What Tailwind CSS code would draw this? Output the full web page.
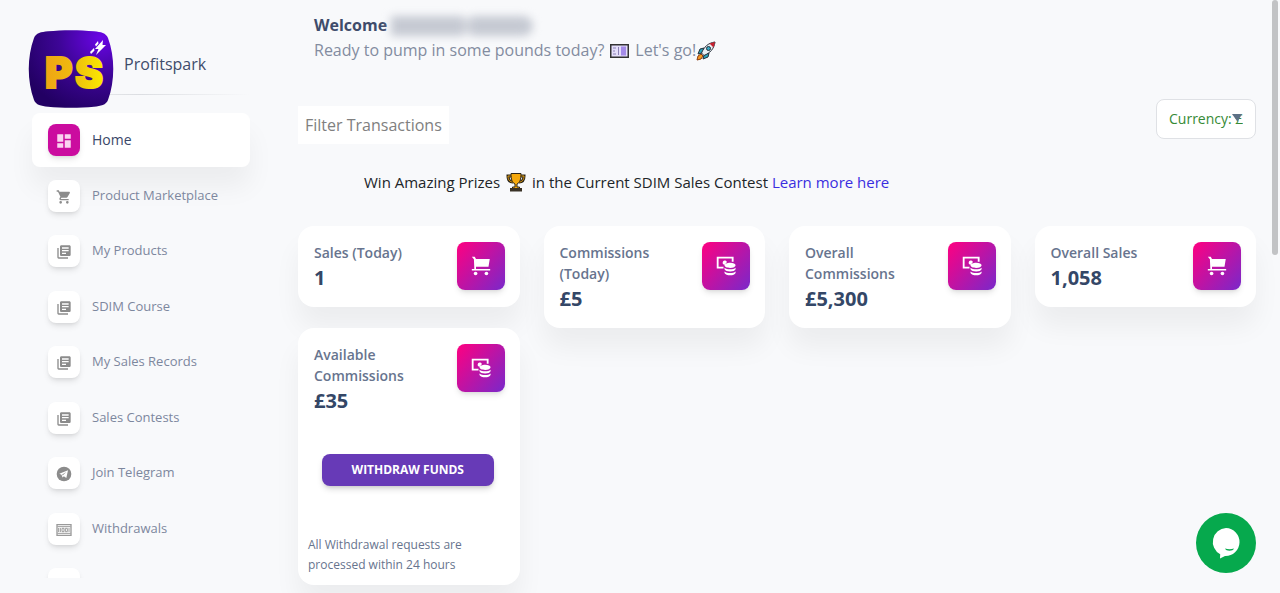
<!DOCTYPE html>
<html lang="en">
<head>
<meta charset="utf-8">
<meta name="viewport" content="width=device-width, initial-scale=1">
<title>Profitspark</title>
<script src="https://cdn.jsdelivr.net/npm/@tailwindcss/browser@4"></script>
</head>
<body class="bg-[#f8f9fb] font-['Open_Sans',sans-serif] text-[#67748e]">
<svg class="hidden" aria-hidden="true">
  <symbol id="cart" viewBox="0 0 24 24"><path fill="currentColor" d="M7 18a2 2 0 1 0 0 4 2 2 0 0 0 0-4zM1 2v2h2l3.600 7.600-1.350 2.440C4.520 15.370 5.480 17 7 17h12v-2H7.420l-.25-.25.9-1.750h7.450c.75 0 1.410-.41 1.750-1.030L21 5.500 20.200 4H5.210l-.94-2H1zm16 16a2 2 0 1 0 0 4 2 2 0 0 0 0-4z"/></symbol>
  <symbol id="cart-flat" viewBox="0 0 24 24"><path fill="currentColor" d="M1 1h3.500l1.500 2.500h16.500L21 13H6v2.500h17v2H1v-2h3L3.500 4z"/><circle cx="5.500" cy="21" r="2.200" fill="currentColor"/><circle cx="18.500" cy="21" r="2.200" fill="currentColor"/></symbol>
  <symbol id="books" viewBox="0 0 24 24"><path fill="currentColor" d="M4 6H2v14c0 1.100.9 2 2 2h14v-2H4V6zm16-4H8c-1.100 0-2 .9-2 2v12c0 1.100.9 2 2 2h12c1.100 0 2-.9 2-2V4c0-1.100-.9-2-2-2zm-1 9H9V9h10v2zm-4 4H9v-2h6v2zm4-8H9V5h10v2z"/></symbol>
  <symbol id="coins" viewBox="0 0 24 24"><path fill="none" stroke="currentColor" stroke-width="2.200" d="M9 14H2V2h18v5"/><path fill="currentColor" d="M11 5.500a2 2 0 0 1 2 2l-3 3a2 2 0 0 1 1-5zM17 8c3.700 0 6.500 1.200 6.500 3.200s-2.800 3.200-6.500 3.200-6.800-1.200-6.800-3.200S13.300 8 17 8zM10.200 14c1.500 1.400 4 2 6.800 2s5-.6 6.500-2v2c-.9 1.700-3.300 2.700-6.500 2.700s-5.900-1-6.800-2.700zM10.200 18.500c1.500 1.400 4 2 6.800 2s5-.6 6.500-2v1.800c-.9 1.800-3.300 2.800-6.500 2.800s-5.900-1-6.800-2.800z"/></symbol>
</svg>

<div class="flex h-screen overflow-hidden">
  <aside class="flex w-[282px] shrink-0 flex-col pt-[30px] pr-8 pb-[15px] pl-7">
    <a href="#" class="relative z-10 flex h-16 items-start gap-2.5 text-base font-medium text-[#3f4c6b]">
      <svg class="h-[78px] w-[86px] shrink-0" viewBox="0 0 86 78" role="img" aria-label="PS logo">
        <defs>
          <radialGradient id="lg" cx="0.85" cy="0.1" r="1"><stop offset="0" stop-color="#6a05e6"/><stop offset="0.5" stop-color="#3d0596"/><stop offset="1" stop-color="#220063"/></radialGradient>
          <linearGradient id="ps" x1="0" x2="1"><stop offset="0" stop-color="#f0a414"/><stop offset="0.5" stop-color="#eebc0e"/><stop offset="1" stop-color="#fbe900"/></linearGradient>
        </defs>
        <path fill="url(#lg)" d="M6 8C8 3 13 2 20 1.300 34-.2 52-.2 66 1.300c7 .7 12 1.700 14 6.700 7 19 7 43 0 62-2 5-7 6-14 6.700-14 1.500-32 1.500-46 0C13 76 8 75 6 70-1 51-1 27 6 8z"/>
        <text x="17 47" y="58" fill="url(#ps)" stroke="url(#ps)" stroke-width="2" font-family="Inter, sans-serif" font-weight="900" font-size="42">PS</text>
        <path fill="#fff" d="M75 10l-8 9h3.500L68 25l10-10h-3.500zM70 11l-3 3.500 1 2 2.500-3zM66 18l-4 4 1 2 3.500-3.500z"/>
      </svg>
      <span class="pt-[22px] leading-6">Profitspark</span>
    </a>
    <hr class="h-px border-0 bg-linear-to-r from-transparent via-[#dcdee2] to-transparent">
    <nav class="-mx-6 min-h-0 flex-1 overflow-hidden px-6 pt-[17px]">
      <ul class="pl-1 text-[13px] text-[#7d879e]">
        <li class="mt-px even:mt-0.5"><a href="#" class="flex h-[54px] items-center gap-3 rounded-lg bg-white px-4 text-sm font-medium text-[#3a4768] shadow-[0_20px_27px_0_rgba(0,0,0,0.05)]">
          <span class="grid size-8 place-items-center rounded-lg bg-[#cb0c9f] shadow-md shadow-black/10"><svg class="mt-0.5 size-[18px] text-[#fad3f0]" viewBox="0 0 24 24"><path fill="currentColor" d="M3 13h8V3H3v10zm0 8h8v-6H3v6zm10 0h8V11h-8v10zm0-18v6h8V3h-8z"/></svg></span>Home</a></li>
        <li class="mt-px even:mt-0.5"><a href="#" class="flex h-[54px] items-center gap-3 px-4"><span class="grid size-8 place-items-center rounded-lg bg-white shadow-md shadow-black/10"><svg class="mt-0.5 size-4 text-[#8c8c8c]"><use href="#cart"/></svg></span>Product Marketplace</a></li>
        <li class="mt-px even:mt-0.5"><a href="#" class="flex h-[54px] items-center gap-3 px-4"><span class="grid size-8 place-items-center rounded-lg bg-white shadow-md shadow-black/10"><svg class="mt-0.5 size-4 text-[#8c8c8c]"><use href="#books"/></svg></span>My Products</a></li>
        <li class="mt-px even:mt-0.5"><a href="#" class="flex h-[54px] items-center gap-3 px-4"><span class="grid size-8 place-items-center rounded-lg bg-white shadow-md shadow-black/10"><svg class="mt-0.5 size-4 text-[#8c8c8c]"><use href="#books"/></svg></span>SDIM Course</a></li>
        <li class="mt-px even:mt-0.5"><a href="#" class="flex h-[54px] items-center gap-3 px-4"><span class="grid size-8 place-items-center rounded-lg bg-white shadow-md shadow-black/10"><svg class="mt-0.5 size-4 text-[#8c8c8c]"><use href="#books"/></svg></span>My Sales Records</a></li>
        <li class="mt-px even:mt-0.5"><a href="#" class="flex h-[54px] items-center gap-3 px-4"><span class="grid size-8 place-items-center rounded-lg bg-white shadow-md shadow-black/10"><svg class="mt-0.5 size-4 text-[#8c8c8c]"><use href="#books"/></svg></span>Sales Contests</a></li>
        <li class="mt-px even:mt-0.5"><a href="#" class="flex h-[54px] items-center gap-3 px-4"><span class="grid size-8 place-items-center rounded-lg bg-white shadow-md shadow-black/10"><svg class="mt-0.5 size-4 text-[#8c8c8c]" viewBox="0 0 24 24"><circle cx="12" cy="12" r="11" fill="currentColor"/><path fill="#fff" d="M18 6.500L5 11.700l3.300 1.300 1.500 4.300 2-2 3.700 2.600zM15.500 9l-5.600 5.200-.6-1.400z"/></svg></span>Join Telegram</a></li>
        <li class="mt-px even:mt-0.5"><a href="#" class="flex h-[54px] items-center gap-3 px-4"><span class="grid size-8 place-items-center rounded-lg bg-white shadow-md shadow-black/10"><svg class="mt-0.5 size-4 text-[#9a9a9a]" viewBox="0 0 24 24"><path fill="none" stroke="currentColor" stroke-width="2" d="M1.500 4h21v16h-21z"/><path fill="none" stroke="currentColor" stroke-width="1.500" d="M2 7h20M2 17h20M6.500 9v6M9 9.500h3v5H9zM14 9.500h3v5h-3zM19.500 9v6M4 9v6"/></svg></span>Withdrawals</a></li>
        <li class="mt-px even:mt-0.5"><a href="#" aria-label="More" class="flex h-[54px] items-center gap-3 px-4"><span class="size-8 rounded-lg bg-white shadow-md shadow-black/10"></span></a></li>
      </ul>
    </nav>
  </aside>

  <main class="min-w-0 flex-1 pt-[13px] pr-6 pl-4">
    <header class="pl-4 leading-[25px]">
      <h1 class="flex items-center gap-1 font-bold text-[#3f4c6b]">Welcome
        <span class="flex blur-xs" aria-hidden="true"><span class="h-5 w-[72px] bg-[#c6cad3]"></span><span class="h-4 w-2 self-center bg-[#d3d6dd]"></span><span class="h-5 w-[62px] rounded-r-full bg-[#c6cad3]"></span></span>
      </h1>
      <p class="flex items-center text-[#838ca0]">Ready to pump in some pounds today?
        <svg class="mx-1.5 h-3.5 w-[19px]" viewBox="0 0 19 14" role="img" aria-label="pound banknote"><path fill="#e4defa" stroke="#333" stroke-width="1.500" d="M.75.75h17.500v12.500H.75z"/><path fill="#a48be8" d="M11 2.500h5v9h-5z"/><path fill="none" stroke="#8b80b5" d="M3 4h3M3 7h2M3 10h3M8.500 3v8"/></svg>
        Let's go!<svg class="size-5" viewBox="0 0 20 20" role="img" aria-label="rocket"><path fill="#f59a23" stroke="#8a3a10" d="M5 13l-3 2-1 4 4-1 2-3z"/><path fill="#2aa5bd" stroke="#252f3a" d="M8 7L4 8l-2 5 4-1zM13 12l-1 4-5 2 1-4z"/><path fill="#e9eef2" stroke="#252f3a" d="M5.500 12C8 6 12 2 19 1c-1 7-5 11-11 13.500z"/><path fill="#c8202f" d="M13.500 2.500L19 1l-1.500 5.500z"/><circle cx="12.500" cy="7.500" r="2" fill="#36a9c4" stroke="#252f3a"/></svg>
      </p>
    </header>

    <div class="mt-9 flex items-start justify-between">
      <button type="button" class="mt-[7px] h-[38px] bg-white px-[7px] text-base text-[#808080]">Filter Transactions</button>
      <div class="relative">
        <select aria-label="Currency" class="h-10 w-[100px] appearance-none rounded-lg border border-[#dfe1e5] bg-white px-3 text-sm text-[#368a36]"><option>Currency: £</option></select>
        <svg class="pointer-events-none absolute top-[15px] right-3.5 h-2 w-2.5 text-[#5d7186]" viewBox="0 0 10 8"><path fill="currentColor" d="M0 0h10L6 7H5z"/></svg>
      </div>
    </div>

    <p class="mt-[26px] flex items-center pl-[66px] text-[15px] leading-6 text-[#212529]">Win Amazing Prizes
      <svg class="mx-1.5 size-5" viewBox="0 0 20 20" role="img" aria-label="trophy"><path fill="none" stroke="#2b2417" stroke-width="3" d="M5.500 4H2c0 4 2 6 5 6M14.500 4H18c0 4-2 6-5 6"/><path fill="none" stroke="#e59f10" d="M5.500 4H2c0 4 2 6 5 6M14.500 4H18c0 4-2 6-5 6"/><path fill="#f5a80c" stroke="#2b2417" d="M5 1.500h10c0 6-1 9-4 10.500V15h2.500v1.500h-7V15H9v-3C6 10.500 5 7.500 5 1.500z"/><path fill="#3a3226" d="M4 16h12v3.500H4z"/></svg>
      <span>in the Current SDIM Sales Contest <a href="#" class="text-[#3a2ee0]">Learn more here</a></span>
    </p>

    <section class="mt-8 grid grid-cols-4 items-start gap-x-6 text-sm font-semibold">
      <article class="flex items-start justify-between rounded-2xl bg-white p-4 pr-[15px] pb-3.5 shadow-[0_20px_27px_0_rgba(0,0,0,0.05)]">
        <div class="w-2/3"><p class="leading-[21px]">Sales (Today)</p><h2 class="text-xl leading-[30px] font-bold text-[#344767]">1</h2></div>
        <span class="grid size-12 shrink-0 place-items-center rounded-lg bg-[linear-gradient(310deg,#7928ca,#ff0080)] text-white shadow-md shadow-black/10"><svg class="size-5"><use href="#cart-flat"/></svg></span>
      </article>
      <article class="flex items-start justify-between rounded-2xl bg-white p-4 pr-[15px] pb-3.5 shadow-[0_20px_27px_0_rgba(0,0,0,0.05)]">
        <div class="w-2/3"><p class="leading-[21px]">Commissions (Today)</p><h2 class="text-xl leading-[30px] font-bold text-[#344767]">£5</h2></div>
        <span class="grid size-12 shrink-0 place-items-center rounded-lg bg-[linear-gradient(310deg,#7928ca,#ff0080)] text-white shadow-md shadow-black/10"><svg class="size-5"><use href="#coins"/></svg></span>
      </article>
      <article class="flex items-start justify-between rounded-2xl bg-white p-4 pr-[15px] pb-3.5 shadow-[0_20px_27px_0_rgba(0,0,0,0.05)]">
        <div class="w-2/3"><p class="leading-[21px]">Overall Commissions</p><h2 class="text-xl leading-[30px] font-bold text-[#344767]">£5,300</h2></div>
        <span class="grid size-12 shrink-0 place-items-center rounded-lg bg-[linear-gradient(310deg,#7928ca,#ff0080)] text-white shadow-md shadow-black/10"><svg class="size-5"><use href="#coins"/></svg></span>
      </article>
      <article class="flex items-start justify-between rounded-2xl bg-white p-4 pr-[15px] pb-3.5 shadow-[0_20px_27px_0_rgba(0,0,0,0.05)]">
        <div class="w-2/3"><p class="leading-[21px]">Overall Sales</p><h2 class="text-xl leading-[30px] font-bold text-[#344767]">1,058</h2></div>
        <span class="grid size-12 shrink-0 place-items-center rounded-lg bg-[linear-gradient(310deg,#7928ca,#ff0080)] text-white shadow-md shadow-black/10"><svg class="size-5"><use href="#cart-flat"/></svg></span>
      </article>
      <article class="rounded-2xl bg-white pb-2.5 shadow-[0_20px_27px_0_rgba(0,0,0,0.05)]">
        <div class="flex items-start justify-between p-4 pr-[15px] pb-0">
          <div class="w-2/3"><p class="leading-[21px]">Available Commissions</p><h2 class="text-xl leading-[30px] font-bold text-[#344767]">£35</h2></div>
          <span class="grid size-12 shrink-0 place-items-center rounded-lg bg-[linear-gradient(310deg,#7928ca,#ff0080)] text-white shadow-md shadow-black/10"><svg class="size-5"><use href="#coins"/></svg></span>
        </div>
        <div class="mt-[38px] pr-[26px] pl-6"><button type="button" class="h-8 w-full rounded-lg bg-[#673ab7] text-xs font-bold text-white shadow-md shadow-black/15">WITHDRAW FUNDS</button></div>
        <p class="mt-[49px] px-2.5 text-xs leading-5 font-normal">All Withdrawal requests are<br>processed within 24 hours</p>
      </article>
    </section>
  </main>
</div>

<div class="fixed top-0 right-0.5 h-[255px] w-1.5 rounded-full bg-[#c2c3c5]"></div>
<button type="button" aria-label="Open chat" class="fixed right-6 bottom-5 grid size-[60px] place-items-center rounded-full bg-[#06a94d]">
  <svg class="size-8" viewBox="0 0 32 32"><path fill="#fff" d="M16 1a14 14 0 1 1-1 28l-5 2.500.2-4.200A14 14 0 0 1 16 1z"/><path fill="#06a94d" d="M15 21.500c3 1 6 1 9 0-1 3-8 3-9 0z"/></svg>
</button>
</body>
</html>
